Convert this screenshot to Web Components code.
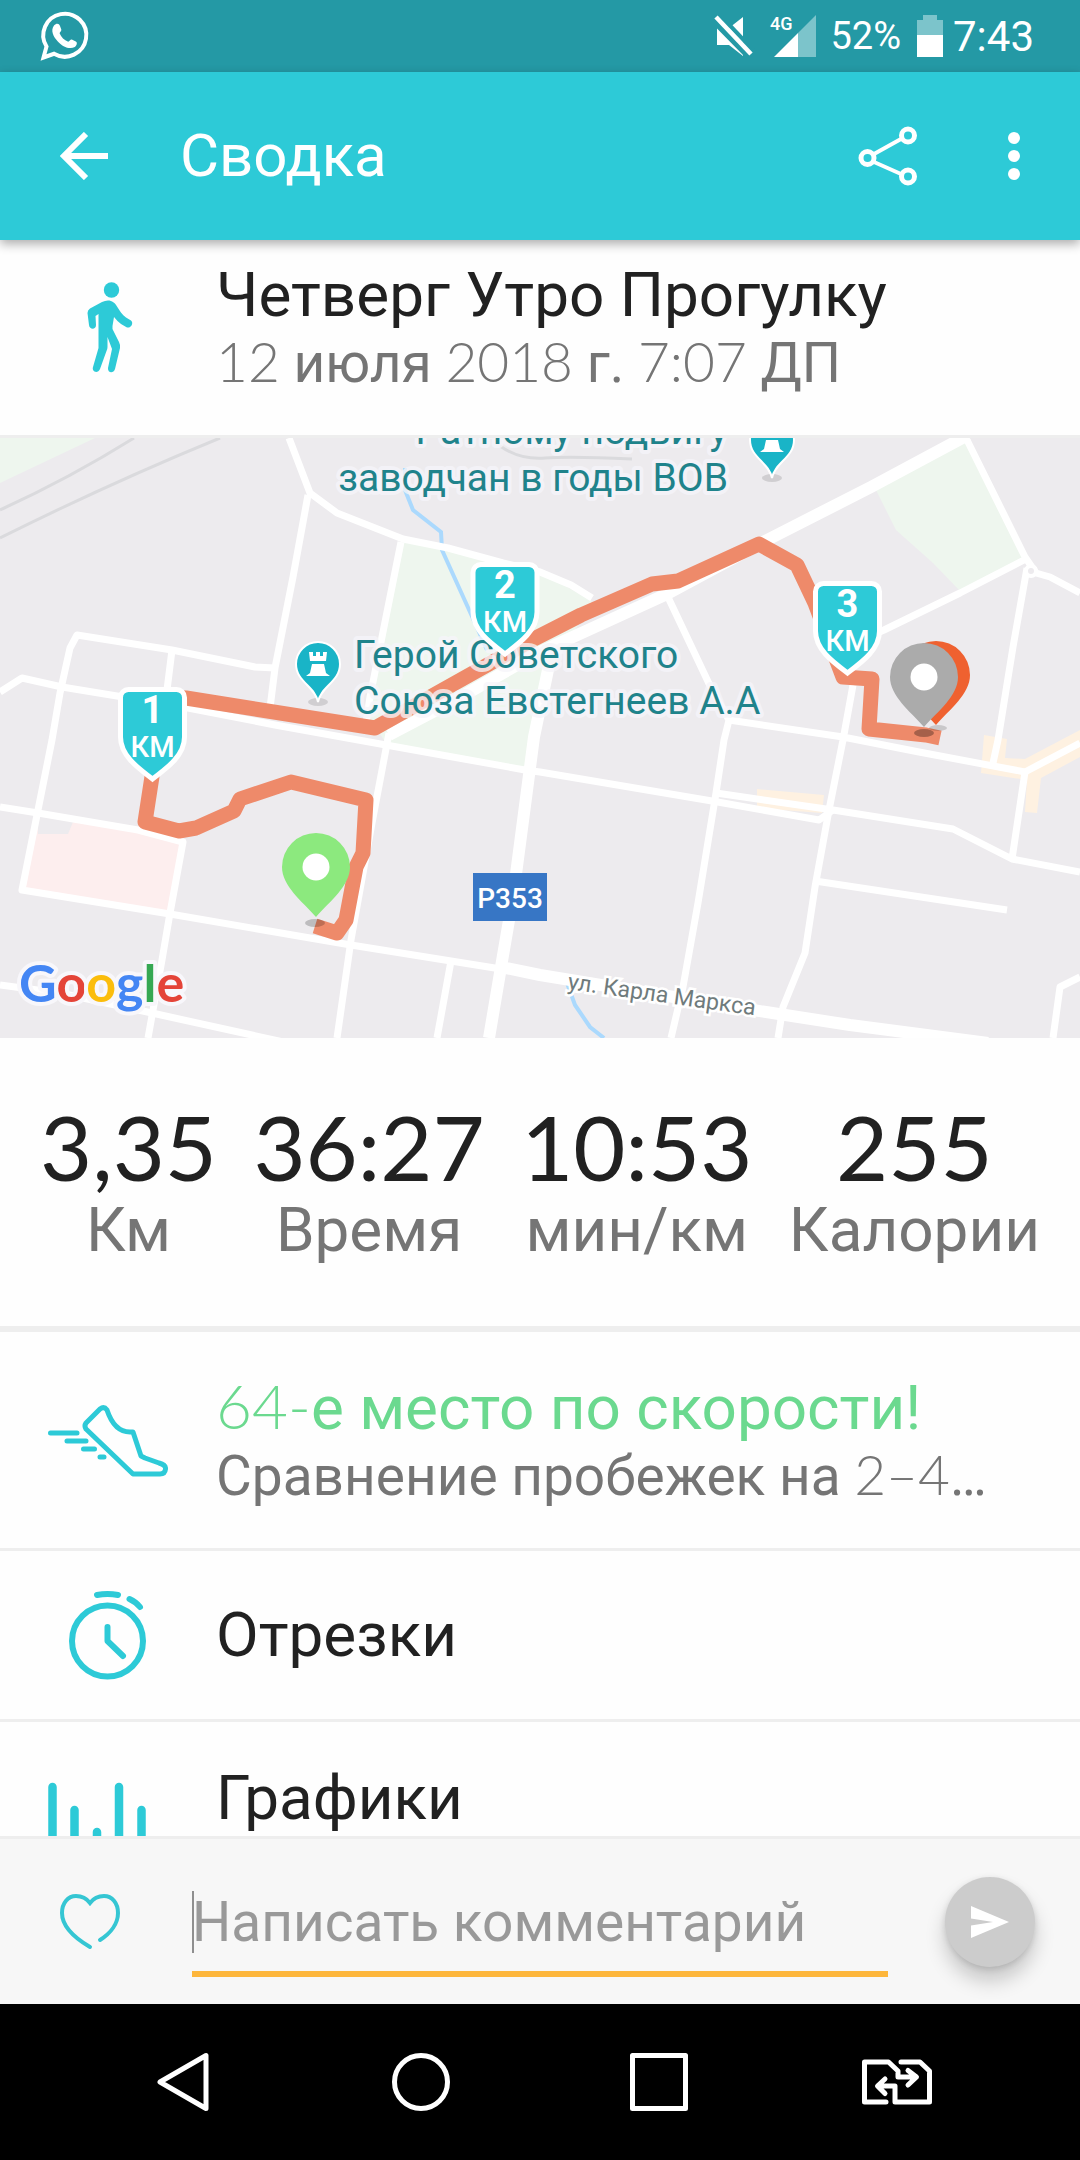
<!DOCTYPE html>
<html lang="ru">
<head>
<meta charset="utf-8">
<meta name="viewport" content="width=device-width, initial-scale=1">
<title>Сводка</title>
<style>
	body {
		margin: 0;
		font-family: Roboto, "Open Sans", sans-serif;
		color: #212121;
		background: #fefefe;
		--accent: #2dcad7;
		--line: #eeeeee;
		--muted: #757575;
	}
</style>
</head>
<body>
<run-summary></run-summary>

<script>
'use strict'

const define = (tag, html, setup) => {
	customElements.define(tag, class extends HTMLElement {
		constructor() {
			super()
			this.attachShadow({ mode: 'open' }).innerHTML = html
		}

		connectedCallback() {
			setup?.(this, this.shadowRoot)
		}
	})
}

// digits use a lighter face than the surrounding text
define('light-digits', `
	<style>
		:host {
			font-family: Lato, "Open Sans", sans-serif;
			font-weight: 300;
			line-height: 1;
		}
	</style>
	<slot></slot>`)

define('status-bar', `
	<style>
		:host {
			display: flex;
			align-items: center;
			box-sizing: border-box;
			height: 72px;
			padding: 0 46px 0 40px;
			background: #2499a5;
			color: #fff;
		}
		svg {
			display: block;
			flex: none;
			overflow: visible;
		}
		.right {
			display: flex;
			align-items: center;
			margin-left: auto;
		}
		.signal {
			margin: 0 14px 0 16px;
		}
		.battery {
			margin: 0 10px 0 16px;
		}
		.percent {
			font-size: 38px;
		}
		time {
			font-size: 42px;
		}
	</style>
	<svg width="50" height="50" viewBox="0 0 50 50" fill="none">
		<path d="M3.5 46.5 6.5 35.5A21.5 21.5 0 1 1 14 42.8Z" stroke="#fff" stroke-width="4"/>
		<path d="M14 14.5c2.5-2.8 5-2.2 6 .5l1.3 3.6c.4 1.2-1.4 2.6-1.7 3.6 1.6 4 4.6 6.900 8.6 8.6 1.2-.3 2.2-2.5 3.6-2.2l4 1.8c2 1 .8 4.2-1 5.6-5.4 3.2-12.8-1-17-5.6-4.4-4.5-7.6-11-3.8-15.9Z" fill="#fff"/>
	</svg>
	<div class="right">
		<svg width="40" height="42" viewBox="0 0 40 42" fill="#fff">
			<path d="M29 2v25L15 13ZM3 13.5 29 40v1L15 30H3Z"/>
			<path d="M5 -1 41 37" stroke="#2499a5" stroke-width="4"/>
			<path d="M2 2 37 39" stroke="#fff" stroke-width="4.5"/>
		</svg>
		<svg class="signal" width="46" height="42" viewBox="0 0 46 42">
			<path d="M46 0v42H28V18Z" fill="#7cc4cb"/>
			<path d="M28 18v24H4Z" fill="#fff"/>
			<text x="0" y="15" font-size="18" font-weight="500" fill="#fff">4G</text>
		</svg>
		<span class="percent">52%</span>
		<svg class="battery" width="26" height="42" viewBox="0 0 26 42">
			<path d="M6 0h14v5h6v15H0V5h6Z" fill="#7cc4cb"/>
			<path d="M0 20h26v22H0Z" fill="#fff"/>
		</svg>
		<time>7:43</time>
	</div>`)

define('app-bar', `
	<style>
		:host {
			display: flex;
			align-items: center;
			box-sizing: border-box;
			height: 168px;
			padding: 0 30px;
			background: var(--accent);
			color: #fff;
			box-shadow: 0 4px 10px rgb(0 0 0 / 32%);
			z-index: 1;
		}
		h1 {
			flex: 1;
			margin: 0;
			font-size: 60px;
			line-height: 72px;
			font-weight: 400;
		}
		button {
			display: grid;
			place-items: center;
			padding: 0;
			border: 0;
			background: none;
			cursor: pointer;
		}
		.back {
			width: 108px;
			height: 108px;
			margin-right: 42px;
		}
		.share {
			width: 100px;
			height: 108px;
		}
		.more {
			width: 72px;
			height: 108px;
			margin-left: 40px;
		}
	</style>
	<button class="back" aria-label="Назад">
		<svg width="48" height="48" viewBox="0 0 48 48" fill="none" stroke="#fff" stroke-width="6">
			<path d="M48 24H5M26 2 4 24l22 22"/>
		</svg>
	</button>
	<h1><slot></slot></h1>
	<button class="share" aria-label="Поделиться">
		<svg width="60" height="60" viewBox="0 0 60 60" fill="none" stroke="#fff" stroke-width="5">
			<path d="M16 28 43 13M16 36l27 12" stroke-width="4"/>
			<circle cx="9.5" cy="32" r="6.5"/>
			<circle cx="50" cy="9.5" r="6.5"/>
			<circle cx="50" cy="50.5" r="6.5"/>
		</svg>
	</button>
	<button class="more" aria-label="Ещё">
		<svg width="12" height="48" viewBox="0 0 12 48" fill="#fff">
			<circle cx="6" cy="6" r="6"/>
			<circle cx="6" cy="24" r="6"/>
			<circle cx="6" cy="42" r="6"/>
		</svg>
	</button>`)

define('info-row', `
	<style>
		:host {
			display: flex;
			align-items: center;
			gap: 48px;
			padding: 40px 40px 40px 48px;
			border-bottom: 3px solid var(--line);
		}
		:host([top]) {
			padding-top: 19px;
		}
		:host([single]) {
			padding-block: 24px;
		}
		.icon {
			flex: none;
			width: 120px;
			height: 120px;
			color: var(--accent);
		}
		.text {
			flex: 1;
			min-width: 0;
			min-height: 136px;
		}
		:host([single]) .text {
			min-height: 72px;
		}
		h2, p {
			margin: 0;
			font-weight: 400;
			white-space: nowrap;
		}
		h2 {
			font-size: 62px;
			line-height: 72px;
		}
		p {
			font-size: 55px;
			line-height: 64px;
			color: var(--muted);
		}
		:host([highlight]) h2 {
			color: #6bd98f;
		}
	</style>
	<div class="icon"><slot name="icon"></slot></div>
	<div class="text">
		<h2><slot></slot></h2>
		<p><slot name="detail"></slot></p>
	</div>`)

define('stat-item', `
	<style>
		:host {
			display: flex;
			flex-direction: column;
			align-items: center;
		}
		dd {
			margin: 0;
			font-family: Lato, "Open Sans", sans-serif;
			font-size: 90px;
			line-height: 96px;
		}
		dt {
			font-size: 62px;
			line-height: 72px;
			color: var(--muted);
			order: 1;
		}
	</style>
	<dt><slot></slot></dt>
	<dd></dd>`, (host, root) => {
	root.querySelector('dd').textContent = host.getAttribute('value')
})

const kmMarker = (x, y, n) => `
	<g transform="translate(${x} ${y})">
		<path d="M-24 2.5H24A8 8 0 0 1 32 10.5V50C32 68 16 80 0 92C-16 80-32 68-32 50V10.5A8 8 0 0 1-24 2.5Z" fill="#2dcad7" stroke="#fff" stroke-width="5"/>
		<text y="36" font-size="38" font-weight="700" fill="#fff" text-anchor="middle">${n}</text>
		<text y="70" font-size="29" font-weight="500" fill="#fff" text-anchor="middle">КМ</text>
	</g>`

const pin = (x, y, color) => `
	<g transform="translate(${x} ${y})">
		<path d="M0 50C-14 34-34 19-34 0A34 34 0 0 1 34 0C34 19 14 34 0 50Z" fill="${color}"/>
		<circle r="13.5" fill="#fff"/>
	</g>`

const castle = (x, y) => `
	<g transform="translate(${x} ${y})">
		<ellipse cy="38" rx="10" ry="4" fill="#000" opacity=".12"/>
		<path d="M0 38C-3 22-22 18-22 0A22 22 0 0 1 22 0C22 18 3 22 0 38Z" fill="#19b4c7" stroke="#fff" stroke-width="2"/>
		<path d="M-9-12h4v4h3v-4h4v4h3v-4h4l-1 9H-8ZM-6 0H6L8 9l4 3H-12l4-3Z" fill="#fff"/>
	</g>`

define('route-map', `
	<style>
		:host {
			display: block;
		}
		svg {
			display: block;
			width: 100%;
		}
		.road {
			fill: none;
			stroke: #fff;
			stroke-width: 7;
			stroke-linejoin: round;
		}
		.wide {
			stroke-width: 12;
		}
		.rail {
			fill: none;
			stroke: #dadadd;
			stroke-width: 3;
		}
		.water {
			fill: none;
			stroke: #abd9fd;
			stroke-width: 4;
		}
		.place {
			font-size: 39px;
			fill: #1f838b;
			stroke: #f6f5fa;
			stroke-opacity: .75;
			stroke-width: 8;
			stroke-linejoin: round;
			paint-order: stroke;
		}
	</style>
	<svg viewBox="0 0 1080 600" role="img" aria-label="Карта маршрута">
		<path d="M0 0H1080V600H0Z" fill="#edebee"/>
		<g fill="#eef6ee">
			<path d="M0 0H95L0 45ZM403 103 503 125 540 134 592 163 549 237 528 332 386 305 366 275Z"/>
			<path d="M965 4 1024 119 962 155 933 125 896 92 876 52Z"/>
		</g>
		<path d="M36 378 181 402 169 474 24 450Z" fill="#fdeeee"/>
		<path d="M38 378 73 384 68 396H38Z" fill="#edebee"/>
		<g fill="#fef1e1">
			<path d="M757 351 824 357 822 375 757 370Z"/>
			<path d="M984 297 1007 301 1005 320 1025 321 1080 292V319L1041 340 1037 375 1025 374 1027 342 981 335Z"/>
		</g>
		<path class="rail" d="M0 72Q70 40 134 0M0 100Q110 45 220 0M500 8Q520 22 545 20T632 21"/>
		<path class="water" d="M405 30V52L413 72 441 94 442 112 475 185 487 212M567 545 575 567 590 589 604 600"/>
		<g class="road">
			<path d="M289 0 310 55 337 75 403 101 448 110 503 125 540 134 571 147 592 160"/>
			<path d="M308 57 293 139 275 230 270 270M401 104 370 259 366 285"/>
			<path d="M389 295 372 385 351 502 337 600"/>
			<path d="M0 254 22 240 62 249 117 258 188 270 275 287 386 307 525 332 540 334 712 363 819 382 833 372"/>
			<path d="M275 230 255 229 172 212 77 197 70 210 60 255 52 302 38 372 22 452 170 476 310 500 351 507 451 523 501 531"/>
			<path d="M172 212 167 252M0 369 38 375 138 392 183 404 170 475 162 522 148 600M451 523 437 600"/>
			<path d="M0 547 60 555 152 575 288 605"/>
			<path d="M967 2 1025 119 1036 135 1050 139 1080 155M1024 122 960 155 884 192 850 207"/>
			<path d="M1027 130 1013 209 998 302 993 325M667 157 712 252 729 282 724 302 716 355 698 465 683 549 671 600"/>
			<path d="M729 282 843 299 919 314 1025 334 1080 305M853 247 843 302 829 372 815 449 805 515 783 569 778 600"/>
			<path d="M716 355 833 372 953 391 1012 421 1080 434M1025 334 1012 421M815 443 1007 472M1080 539 1060 549 1053 600"/>
		</g>
		<g class="road wide">
			<path d="M968-3 871 49 767 102 667 156 540 214 450 265 389 297"/>
			<path d="M549 227 534 299 513 459 501 529 489 600M501 529 540 537 753 572 850 587 988 605"/>
		</g>
		<circle cx="1031" cy="133" r="5" fill="#edebee" stroke="#fff" stroke-width="4"/>
		<path d="M315 488 337 495 346 482 356 429 363 415 366 362 291 344 240 361 234 373 196 390 179 393 145 384 153 332 160 258 186 260 375 290 530 203 581 177 652 146 678 143 759 106 797 127 815 165 843 239 872 241 869 291 926 297 940 300" fill="none" stroke="#ee8a6a" stroke-width="15" stroke-linejoin="round"/>
		<g class="place" text-anchor="end">
			<text x="728" y="6">Ратному подвигу</text>
			<text x="728" y="53">заводчан в годы ВОВ</text>
		</g>
		<g class="place">
			<text x="354" y="230">Герой Советского</text>
			<text x="354" y="276">Союза Евстегнеев А.А</text>
		</g>
		${castle(772, 2)}
		${castle(318, 226)}
		<path d="M473 435H547V483H473Z" fill="#3776c5"/>
		<text x="510" y="470" font-size="28" font-weight="500" fill="#fff" text-anchor="middle">P353</text>
		<text transform="translate(567 551) rotate(8)" font-size="23" fill="#6f7b7c" stroke="#fff" stroke-width="5" paint-order="stroke">ул. Карла Маркса</text>
		<ellipse cx="315" cy="485" rx="10" ry="4" opacity=".2"/>
		${pin(316, 429, '#8ce97e')}
		<ellipse cx="938" cy="290" rx="9" ry="3" opacity=".15"/>
		${pin(936, 237, '#ef6130')}
		<ellipse cx="924" cy="295" rx="10" ry="4" opacity=".3"/>
		${pin(924, 239, '#ababab')}
		${kmMarker(152.5, 249, 1)}
		${kmMarker(505, 124, 2)}
		${kmMarker(847.5, 143, 3)}
		<text x="19" y="564" font-family="Lato, sans-serif" font-size="52" font-weight="700" stroke="#f8f7fb" stroke-width="8" stroke-linejoin="round" paint-order="stroke"><tspan fill="#4486f4">G</tspan><tspan fill="#e44438">o</tspan><tspan fill="#fbbd0c">o</tspan><tspan fill="#4486f4">g</tspan><tspan fill="#36a853">l</tspan><tspan fill="#e44438">e</tspan></text>
	</svg>`)

define('comment-bar', `
	<style>
		:host {
			display: block;
			background: #f7f7f7;
			border-top: 3px solid var(--line);
		}
		form {
			display: flex;
			align-items: center;
			height: 165px;
			padding: 0 45px;
		}
		button {
			display: grid;
			place-items: center;
			flex: none;
			width: 90px;
			height: 90px;
			padding: 0;
			border: 0;
			border-radius: 50%;
			background: none;
			cursor: pointer;
		}
		label {
			flex: 1;
			min-width: 0;
			margin: 24px 57px 0;
			padding-bottom: 18px;
			border-bottom: 6px solid #fdb63b;
		}
		input {
			display: block;
			box-sizing: border-box;
			width: 100%;
			height: 62px;
			padding: 0;
			border: 0;
			outline: 0;
			background: linear-gradient(#8f8f8f, #8f8f8f) left / 2px 100% no-repeat;
			font: inherit;
			font-size: 55px;
		}
		input::placeholder {
			color: #999;
			opacity: 1;
		}
		.send {
			background: #ccc;
			box-shadow: 0 14px 20px rgb(0 0 0 / 20%), 0 2px 6px rgb(0 0 0 / 12%);
		}
	</style>
	<form>
		<button type="button" aria-label="Нравится">
			<svg width="62" height="56" viewBox="0 0 62 56" fill="none" stroke="#35c6d3" stroke-width="4" stroke-linecap="round">
				<path d="M31 53C14 43 3 31 3 19C3 9 9 2 17 2C23 2 28 5 31 9C34 5 39 2 45 2C53 2 59 9 59 19C59 29 52 39 41 46"/>
			</svg>
		</button>
		<label><input type="text" placeholder="Написать комментарий" aria-label="Написать комментарий"></label>
		<button class="send" aria-label="Отправить">
			<svg width="38" height="32" viewBox="0 0 38 32" fill="#fff">
				<path d="M0 0 38 16 0 32V19.5L22 16 0 12.5Z"/>
			</svg>
		</button>
	</form>`, (host, root) => {
	root.querySelector('form').addEventListener('submit', (event) => {
		event.preventDefault()
	})
})

define('system-nav', `
	<style>
		:host {
			display: flex;
			height: 156px;
			padding: 0 64px;
			background: #000;
		}
		button {
			display: grid;
			place-items: center;
			flex: 1;
			padding: 0;
			border: 0;
			background: none;
			cursor: pointer;
		}
		svg {
			fill: none;
			stroke: #fff;
			stroke-width: 5;
			stroke-linejoin: round;
			stroke-linecap: round;
		}
	</style>
	<button aria-label="Назад">
		<svg width="52" height="60" viewBox="0 0 52 60"><path d="M3 30 49 3.5V56.5Z"/></svg>
	</button>
	<button aria-label="Домой">
		<svg width="60" height="60" viewBox="0 0 60 60"><circle cx="30" cy="30" r="26.5"/></svg>
	</button>
	<button aria-label="Недавние">
		<svg width="60" height="60" viewBox="0 0 60 60"><path d="M3.5 3.5h53v53h-53Z"/></svg>
	</button>
	<button aria-label="Переключить SIM">
		<svg width="70" height="46" viewBox="0 0 70 46">
			<path d="M24 43H2.5V3H26.5L36 12V18H54M46 11.5 54.5 18 46 26M39 3H58L67.5 12V43H33V27H16M23 20 15.5 27 23 34.5"/>
		</svg>
	</button>`)

define('run-summary', `
	<style>
		:host {
			display: flex;
			flex-direction: column;
			height: 100vh;
		}
		main {
			flex: 1;
			min-height: 0;
			overflow: hidden;
		}
		dl {
			display: flex;
			justify-content: space-between;
			margin: 0;
			padding: 60px 40px 60px;
			border-bottom: 6px solid var(--line);
		}
		stat-item {
			height: 168px;
		}
		svg {
			display: block;
		}
		.line {
			fill: none;
			stroke: currentColor;
			stroke-linecap: round;
			stroke-linejoin: round;
		}
	</style>
	<status-bar></status-bar>
	<app-bar>Сводка</app-bar>
	<main>
		<info-row top>
			<svg slot="icon" width="120" height="120" viewBox="0 0 120 120" fill="currentColor">
				<circle cx="63.5" cy="23" r="7.7"/>
				<path d="M60 33.5C64 33.5 67 36 69 39.5 72 44 74 48 78 50.5L83 53.5C86 56 83 61.5 79 60.5L73 57Q69 54 66 50L64.5 59V62L71 75Q72.5 78 72 81L67 102C65.5 107 59.5 106 60 101L64 82 59.5 70V80Q59.5 82 58.5 84L52 102C50 107 43.5 105 45 100L50.5 81V47L47.5 49 48 58C48 63 41.5 63 41 58L39.5 46Q39.5 43 42 41.5L54 35Q57 33.5 60 33.5Z"/>
			</svg>
			Четверг Утро Прогулку
			<span slot="detail"><light-digits>12</light-digits> июля <light-digits>2018</light-digits> г. <light-digits>7:07</light-digits> ДП</span>
		</info-row>
		<route-map></route-map>
		<dl>
			<stat-item value="3,35">Км</stat-item>
			<stat-item value="36:27">Время</stat-item>
			<stat-item value="10:53">мин/км</stat-item>
			<stat-item value="255">Калории</stat-item>
		</dl>
		<info-row highlight>
			<svg slot="icon" class="line" width="120" height="120" viewBox="0 0 120 120" stroke-width="5">
				<path d="M52 29Q56 26 59 30C63 42 70 52 82 52H85L93 76 97 78 111 83Q118 85 117.5 89Q117 94 112 94H85L38 49Q36 46 38 43Z"/>
				<path d="M2.5 53H29M19 61H38M35.5 69H46.5M52 77H56"/>
			</svg>
			<light-digits>64-</light-digits>е место по скорости!
			<span slot="detail">Сравнение пробежек на <light-digits>2–4</light-digits>…</span>
		</info-row>
		<info-row single>
			<svg slot="icon" class="line" width="120" height="120" viewBox="0 0 120 120" stroke-width="6">
				<circle cx="59.5" cy="66" r="35.5"/>
				<path d="M49 20Q59.5 18 70 20M81.5 24Q88 27 92 32M59.5 52V66L75 81"/>
			</svg>
			Отрезки
		</info-row>
		<info-row>
			<svg slot="icon" class="line" width="120" height="120" viewBox="0 0 120 120" stroke-width="8.5">
				<path d="M4.5 17V100M26.5 40V100M49 62V100M71 17V100M93.5 40V100"/>
			</svg>
			Графики
		</info-row>
	</main>
	<comment-bar></comment-bar>
	<system-nav></system-nav>`)
</script>
</body>
</html>
